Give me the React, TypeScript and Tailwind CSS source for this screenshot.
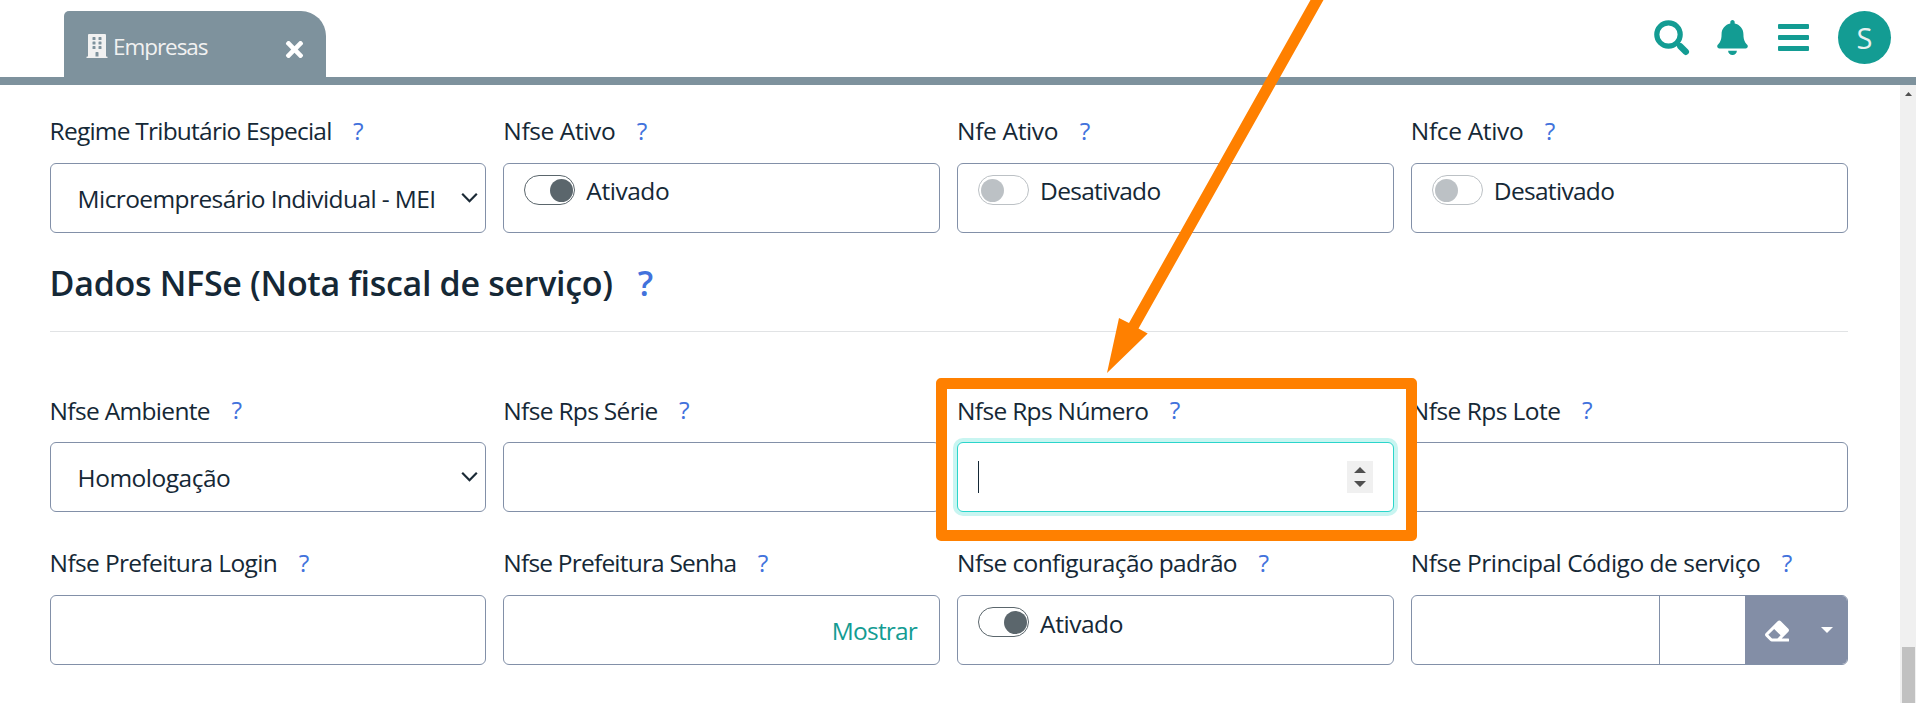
import React, { ReactNode } from "react";
import { FaBell, FaBuilding, FaEraser, FaTimes } from "react-icons/fa";

function Label({ children, fit }: { children: string; fit: string }) {
  return (
    <div className="flex h-[34px] items-center text-[24.5px] leading-[34px] whitespace-nowrap">
      <span className={fit}>{children}</span>
      <span className="ml-[21.5px] text-[#4272dc]">?</span>
    </div>
  );
}

function Field({ label, fit, children }: { label: string; fit: string; children: ReactNode }) {
  return (
    <div className="flex min-w-0 flex-col gap-[15px]">
      <Label fit={fit}>{label}</Label>
      {children}
    </div>
  );
}

const box = "h-[70px] w-full rounded-[6px] border border-[#8290a8] bg-white";

function Select({ children, fit }: { children: string; fit: string }) {
  return (
    <div className={`${box} flex items-center justify-between pr-[7px] pl-[27px]`}>
      <span className={`pt-[2px] text-[24.5px] whitespace-nowrap ${fit}`}>{children}</span>
      <svg width="17" height="12" viewBox="0 0 17 12" className="shrink-0" fill="none" stroke="#1b2a36" strokeWidth="2.2">
        <path d="M1.2 1.8 8.5 9.2 15.8 1.8" />
      </svg>
    </div>
  );
}

function Toggle({ on, leading }: { on: boolean; leading: string }) {
  return (
    <div className={`${box} flex items-start pt-[11px] pl-[20px]`}>
      <div
        className={
          on
            ? "flex h-[30px] w-[51px] items-center justify-end rounded-full border border-[#5b666c] pr-[1px]"
            : "flex h-[30px] w-[51px] items-center justify-start rounded-full border border-[#bcc1c5] pl-[2px]"
        }
      >
        <div className={on ? "size-[23px] rounded-full bg-[#5b666c]" : "size-[23px] rounded-full bg-[#bcc1c5]"} />
      </div>
      <span className={`ml-[11px] text-[24.5px] ${leading} ${on ? "tracking-[-0.45px]" : "tracking-[-0.7px]"}`}>
        {on ? "Ativado" : "Desativado"}
      </span>
    </div>
  );
}

export default function App() {
  return (
    <div className="relative flex h-[703px] w-[1916px] flex-col overflow-hidden bg-white font-['Open_Sans','Noto_Sans',sans-serif] text-[#152836]">
      <header className="flex h-[85px] shrink-0 items-start justify-between border-b-8 border-[#7e929d] pt-[11px] pr-[25px] pl-[64px]">
        <div className="flex h-[66px] w-[262px] items-start rounded-tl-[5px] rounded-tr-[25px] bg-[#7e929d] pr-[19px] pl-[22px] text-[#f1f1f1]">
          <FaBuilding className="mt-[23px] h-[24px] w-[22px]" />
          <span className="mt-[20px] ml-[5px] text-[22.5px] leading-[32px] tracking-[-1.05px]">Empresas</span>
          <FaTimes className="mt-[26px] ml-auto size-[25px] text-white" />
        </div>
        <div className="flex items-start text-[#139c93]">
          <svg width="36" height="36" viewBox="0 0 36 36" className="mt-[9px]" fill="none" stroke="currentColor">
            <circle cx="14.5" cy="14.5" r="11.7" strokeWidth="5.2" />
            <path d="M22 22 27 27" strokeWidth="4.6" />
            <path d="M26.5 26.5 31.8 31.8" strokeWidth="6.4" strokeLinecap="round" />
          </svg>
          <FaBell className="mt-[9px] ml-[27px] h-[35px] w-[31px]" />
          <div className="mt-[13px] ml-[30px] flex w-[31px] flex-col gap-[6px]">
            <div className="h-[5px] rounded-[1px] bg-current" />
            <div className="h-[5px] rounded-[1px] bg-current" />
            <div className="h-[5px] rounded-[1px] bg-current" />
          </div>
          <div className="ml-[29px] flex size-[53px] items-center justify-center rounded-full bg-[#139c93] pt-[1px] text-[29px] text-[#e8f1f0]">S</div>
        </div>
      </header>

      <div className="flex min-h-0 flex-1">
        <main className="flex-1 pt-[29px] pr-[52.4px] pl-[49.6px]">
          <div className="grid grid-cols-4 gap-x-[17px]">
            <Field label="Regime Tributário Especial" fit="tracking-[-0.78px]">
              <Select fit="tracking-[-0.59px]">Microempresário Individual - MEI</Select>
            </Field>
            <Field label="Nfse Ativo" fit="tracking-[-0.4px]">
              <Toggle on leading="leading-[32px]" />
            </Field>
            <Field label="Nfe Ativo" fit="tracking-[-0.35px]">
              <Toggle on={false} leading="leading-[32px]" />
            </Field>
            <Field label="Nfce Ativo" fit="tracking-[-0.35px]">
              <Toggle on={false} leading="leading-[32px]" />
            </Field>
          </div>

          <h2 className="flex h-[99px] items-center border-b border-[#e1e3e5] pt-[3px] text-[34px] font-semibold whitespace-nowrap">
            <span className="tracking-[-0.3px]">Dados NFSe (Nota fiscal de serviço)</span>
            <span className="ml-[25px] text-[#4272dc]">?</span>
          </h2>

          <div className="mt-[61px] grid grid-cols-4 gap-x-[17px] gap-y-[34px]">
            <Field label="Nfse Ambiente" fit="pt-[2px] tracking-[-0.68px]">
              <Select fit="tracking-[-0.49px]">Homologação</Select>
            </Field>
            <Field label="Nfse Rps Série" fit="pt-[2px] tracking-[-0.68px]">
              <div className={box} />
            </Field>
            <Field label="Nfse Rps Número" fit="pt-[2px] tracking-[-0.68px]">
              <div className="flex h-[70px] w-full items-center justify-between rounded-[6px] border border-[#2bd5cb] bg-white pr-[20px] pl-[20px] shadow-[0_0_0_4px_#c8f5f1]">
                <div className="h-[32px] w-px bg-[#152836]" />
                <div className="flex h-[32px] w-[26px] items-center justify-center bg-[#f0f0f0]">
                  <svg width="12" height="20" viewBox="0 0 12 20" fill="#505050">
                    <path d="M0 6 6 0 12 6ZM0 14H12L6 20Z" />
                  </svg>
                </div>
              </div>
            </Field>
            <Field label="Nfse Rps Lote" fit="pt-[2px] tracking-[-0.54px]">
              <div className={box} />
            </Field>
            <Field label="Nfse Prefeitura Login" fit="tracking-[-0.64px]">
              <div className={box} />
            </Field>
            <Field label="Nfse Prefeitura Senha" fit="tracking-[-0.8px]">
              <div className={`${box} flex items-center justify-end pt-[2px] pr-[22px] text-[24.5px] text-[#139c93]`}>
                <span className="tracking-[-0.8px]">Mostrar</span>
              </div>
            </Field>
            <Field label="Nfse configuração padrão" fit="tracking-[-0.62px]">
              <Toggle on leading="leading-[34px]" />
            </Field>
            <Field label="Nfse Principal Código de serviço" fit="tracking-[-0.48px]">
              <div className={`${box} flex overflow-hidden`}>
                <div className="w-[248px] border-r border-[#8290a8]" />
                <div className="w-[85px]" />
                <div className="flex flex-1 items-center bg-[#838ea6] pl-[20px] text-white">
                  <FaEraser className="mt-[2px] h-[24px] w-[24px]" />
                  <svg width="12" height="6" viewBox="0 0 12 6" className="ml-[32px]" fill="currentColor">
                    <path d="M0 0H12L6 6Z" />
                  </svg>
                </div>
              </div>
            </Field>
          </div>
        </main>

        <aside className="flex w-[16px] shrink-0 flex-col items-center justify-between bg-[#f0f0f0] pt-[7px]">
          <svg width="7" height="4" viewBox="0 0 7 4" fill="#505050">
            <path d="M0 4 3.5 0 7 4Z" />
          </svg>
          <div className="h-[56px] w-[13px] bg-[#c1c1c1]" />
        </aside>
      </div>

      <div className="absolute top-[378px] left-[936px] h-[163px] w-[481px] rounded-[5px] border-11 border-[#ff8000]" />
      <svg className="absolute top-0 left-[1100px]" width="230" height="376" viewBox="1100 0 230 376" fill="#ff8000">
        <path d="M1310.5 0H1323.5L1138.5 328.5 1147.7 333.5 1107 373 1119 318 1129 323Z" />
      </svg>
    </div>
  );
}
